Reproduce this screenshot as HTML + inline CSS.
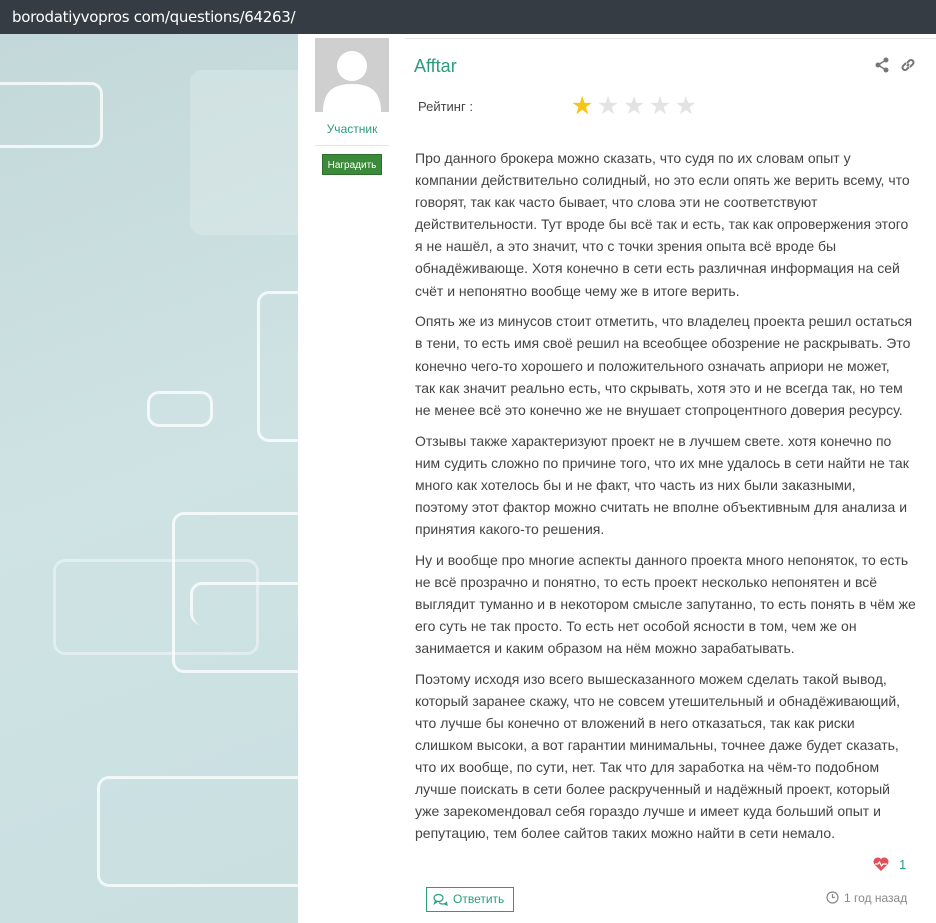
<!DOCTYPE html>
<html><head><meta charset="utf-8"><style>
body{margin:0;width:936px;height:923px;overflow:hidden;background:#fff;font-family:"Liberation Sans",sans-serif;position:relative}
.top{position:absolute;left:0;top:0;width:936px;height:34px;background:#353c44;color:#fff;font-size:15px;line-height:34px;padding-left:12px;box-sizing:border-box;font-family:"DejaVu Sans","Liberation Sans",sans-serif;letter-spacing:-0.3px}
.left{position:absolute;left:0;top:34px;width:298px;height:889px;background:linear-gradient(160deg,#c3d8d9 0%,#cfe3e4 50%,#c9dfe0 100%);overflow:hidden}
.left div{position:absolute;border:3px solid rgba(255,255,255,.75);border-radius:12px}
.av{position:absolute;left:315px;top:38px;width:74px;height:74px;background:#cfcfcf;overflow:hidden}
.role{position:absolute;left:315px;top:122px;width:74px;text-align:center;color:#2a9d7c;font-size:12px}
.sep{position:absolute;left:315px;top:145px;width:74px;height:1px;background:#e5e5e5}
.btn{position:absolute;left:322px;top:154px;width:60px;height:21px;background:#3a8a3a;color:#fff;font-size:10px;line-height:21px;text-align:center;border:1px solid #2d6e2d;box-sizing:border-box}
.hr{position:absolute;left:405px;top:38px;width:531px;height:1px;background:#e6e6e6}
.name{position:absolute;left:414px;top:56px;color:#2a9d7c;font-size:18px}
.rt{position:absolute;left:418px;top:99px;color:#444;font-size:13px}
.stars{position:absolute;left:571px;top:91px;font-size:25px;letter-spacing:3.5px;color:#e3e3e3}
.stars b{color:#f5c518;font-weight:normal}
.txt{position:absolute;left:415px;top:147px;color:#444;font-size:14px;line-height:22.1px;width:515px}
.txt p{margin:0 0 8.7px 0;white-space:nowrap}
.ico{position:absolute;color:#777}
</style></head><body>
<div class="top">borodatiyvopros com/questions/64263/</div>
<div class="left">
<div style="left:-20px;top:48px;width:117px;height:60px"></div>
<div style="left:190px;top:36px;width:140px;height:165px;border:none;background:rgba(255,255,255,.2)"></div>
<div style="left:257px;top:257px;width:80px;height:145px;border-right:none"></div>
<div style="left:147px;top:357px;width:60px;height:30px"></div>
<div style="left:172px;top:478px;width:160px;height:155px;border-right:none"></div>
<div style="left:53px;top:525px;width:200px;height:90px;border-color:rgba(255,255,255,.4)"></div>
<div style="left:190px;top:548px;width:140px;height:40px;border-right:none;border-bottom:none"></div>
<div style="left:97px;top:742px;width:240px;height:105px;border-right:none"></div>
</div>
<div class="av"><svg width="74" height="74"><circle cx="37" cy="28" r="15" fill="#fff"/><path d="M8 74 C8 52 20 46 37 46 C54 46 66 52 66 74Z" fill="#fff"/></svg></div>
<div class="role">Участник</div>
<div class="sep"></div>
<div class="btn">Наградить</div>
<div class="hr"></div>
<div class="name">Afftar</div>
<div class="rt">Рейтинг :</div>
<div class="stars"><b>★</b>★★★★</div>
<svg class="ico" style="left:874px;top:57px" width="16" height="16" viewBox="0 0 16 16" fill="#777"><circle cx="12" cy="3" r="2.5"/><circle cx="4" cy="8" r="2.5"/><circle cx="12" cy="13" r="2.5"/><path d="M4 8L12 3M4 8L12 13" stroke="#777" stroke-width="1.5"/></svg>
<svg class="ico" style="left:900px;top:57px" width="16" height="16" viewBox="0 0 16 16"><path d="M7 9l2-2M6 6L3 9a2.5 2.5 0 003.5 3.5L9 10M10 10l3-3A2.5 2.5 0 009.5 3.5L7 6" stroke="#777" stroke-width="2" fill="none"/></svg>
<div class="txt">
<p>Про данного брокера можно сказать, что судя по их словам опыт у<br>компании действительно солидный, но это если опять же верить всему, что<br>говорят, так как часто бывает, что слова эти не соответствуют<br>действительности. Тут вроде бы всё так и есть, так как опровержения этого<br>я не нашёл, а это значит, что с точки зрения опыта всё вроде бы<br>обнадёживающе. Хотя конечно в сети есть различная информация на сей<br>счёт и непонятно вообще чему же в итоге верить.</p>
<p>Опять же из минусов стоит отметить, что владелец проекта решил остаться<br>в тени, то есть имя своё решил на всеобщее обозрение не раскрывать. Это<br>конечно чего-то хорошего и положительного означать априори не может,<br>так как значит реально есть, что скрывать, хотя это и не всегда так, но тем<br>не менее всё это конечно же не внушает стопроцентного доверия ресурсу.</p>
<p>Отзывы также характеризуют проект не в лучшем свете. хотя конечно по<br>ним судить сложно по причине того, что их мне удалось в сети найти не так<br>много как хотелось бы и не факт, что часть из них были заказными,<br>поэтому этот фактор можно считать не вполне объективным для анализа и<br>принятия какого-то решения.</p>
<p>Ну и вообще про многие аспекты данного проекта много непоняток, то есть<br>не всё прозрачно и понятно, то есть проект несколько непонятен и всё<br>выглядит туманно и в некотором смысле запутанно, то есть понять в чём же<br>его суть не так просто. То есть нет особой ясности в том, чем же он<br>занимается и каким образом на нём можно зарабатывать.</p>
<p>Поэтому исходя изо всего вышесказанного можем сделать такой вывод,<br>который заранее скажу, что не совсем утешительный и обнадёживающий,<br>что лучше бы конечно от вложений в него отказаться, так как риски<br>слишком высоки, а вот гарантии минимальны, точнее даже будет сказать,<br>что их вообще, по сути, нет. Так что для заработка на чём-то подобном<br>лучше поискать в сети более раскрученный и надёжный проект, который<br>уже зарекомендовал себя гораздо лучше и имеет куда больший опыт и<br>репутацию, тем более сайтов таких можно найти в сети немало.</p>
</div>
<svg style="position:absolute;left:873px;top:857px" width="16" height="14" viewBox="0 0 16 14"><path d="M8 14L1.5 7.5A4 4 0 018 2a4 4 0 016.5 5.5Z" fill="#e0505a"/><path d="M2 7h3l1.5-2 2 4 1.5-2h4" stroke="#fff" stroke-width="1.2" fill="none"/></svg>
<div style="position:absolute;left:899px;top:857px;color:#2a9d7c;font-size:13px">1</div>
<div style="position:absolute;left:426px;top:887px;width:88px;height:25px;border:1px solid #2a9d7c;box-sizing:border-box;color:#2a9d7c;font-size:12px;line-height:23px;padding-left:26px">Ответить</div>
<svg style="position:absolute;left:433px;top:893px" width="15" height="13" viewBox="0 0 15 13"><path d="M1 5a4.5 3.5 0 109 0a4.5 3.5 0 10-9 0M2.5 8L1.5 10.5L4.5 8.5M6 9.5a4.5 3.5 0 007.5 0L14 12L11.5 11" stroke="#2a9d7c" stroke-width="1.2" fill="none"/></svg>
<svg style="position:absolute;left:826px;top:891px" width="13" height="13" viewBox="0 0 13 13"><circle cx="6.5" cy="6.5" r="5.5" stroke="#888" stroke-width="1.2" fill="none"/><path d="M6.5 3v3.5h2.5" stroke="#888" stroke-width="1.2" fill="none"/></svg>
<div style="position:absolute;left:844px;top:891px;color:#888;font-size:12px">1 год назад</div>
</body></html>
